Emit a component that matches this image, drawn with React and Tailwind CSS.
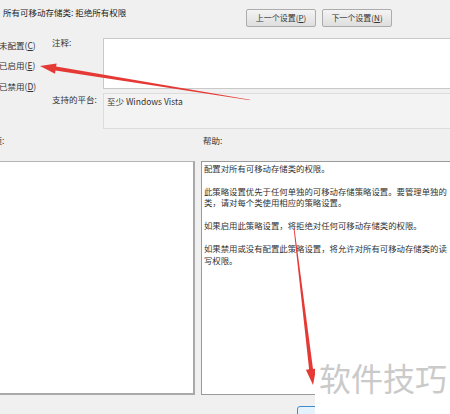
import React from "react";

const font = { fontFamily: '"Noto Sans CJK SC", "Noto Sans", sans-serif' };

function Btn({ children }) {
  return (
    <div className="shrink-0 w-[70px] h-[18px] flex items-center justify-center border border-[#acacac] rounded-[2px] bg-gradient-to-b from-[#f4f4f4] to-[#dedede] text-[8px] leading-[10px] text-[#333]">
      {children}
    </div>
  );
}

export default function App() {
  return (
    <div
      className="relative w-[450px] h-[414px] overflow-hidden bg-[#f0f0f0] text-[#222]"
      style={font}
    >
      {/* top bar */}
      <div className="flex h-[36px]">
        <div className="shrink-0 pl-[3px] pt-[7px] text-[8.5px] leading-[11px] whitespace-nowrap">
          所有可移动存储类: 拒绝所有权限
        </div>
        <div className="ml-auto mr-[58px] mt-[9px] flex gap-[6px]">
          <Btn>
            上一个设置(<span className="underline">P</span>)
          </Btn>
          <Btn>
            下一个设置(<span className="underline">N</span>)
          </Btn>
        </div>
      </div>

      {/* middle */}
      <div className="flex h-[93px]">
        <div className="shrink-0 w-[52px] flex flex-col gap-[9.5px] pt-[3.5px] -ml-[1px] text-[8.5px] leading-[11px] whitespace-nowrap text-[#333]">
          <div>
            未配置(<span className="underline">C</span>)
          </div>
          <div>
            已启用(<span className="underline">E</span>)
          </div>
          <div>
            已禁用(<span className="underline">D</span>)
          </div>
        </div>
        <div className="shrink-0 flex flex-col pt-[2px] ml-[1px]">
          <div className="flex">
            <div className="shrink-0 w-[51px] text-[8.5px] leading-[9px] text-[#333]">注释:</div>
            <div className="shrink-0 w-[360px] h-[51px] border border-[#c9c9c9] bg-white" />
          </div>
          <div className="flex mt-[4px]">
            <div className="shrink-0 w-[51px] pt-[1px] text-[8.5px] leading-[11px] whitespace-nowrap text-[#333]">
              支持的平台:
            </div>
            <div className="shrink-0 w-[360px] h-[36px] border border-[#dcdcdc] bg-[#f3f3f3] pl-[3px] pt-[2px] text-[8.5px] leading-[11px] text-[#333]">
              至少 Windows Vista
            </div>
          </div>
        </div>
      </div>

      {/* section labels */}
      <div className="flex h-[32px] pt-[6px] text-[8.5px] leading-[11px] text-[#333]">
        <div className="shrink-0 w-[203px] -ml-[15px] whitespace-nowrap">选项:</div>
        <div className="shrink-0 pl-[15px] whitespace-nowrap">帮助:</div>
      </div>

      {/* panels */}
      <div className="flex gap-[6px] h-[234px]">
        <div className="shrink-0 w-[195px] h-full bg-white border-t border-[#b5b5b5] border-r-2 border-b-2 border-r-[#a9a9a9] border-b-[#a9a9a9]" />
        <div className="shrink-0 w-[260px] h-full bg-white border border-[#9a9a9a] pl-[2px] pt-[0.5px] overflow-hidden text-[8.4px] leading-[11.5px] text-[#333] whitespace-nowrap">
          <div>配置对所有可移动存储类的权限。</div>
          <div className="mt-[11.5px]">此策略设置优先于任何单独的可移动存储策略设置。要管理单独的</div>
          <div>类，请对每个类使用相应的策略设置。</div>
          <div className="mt-[11.5px]">如果启用此策略设置，将拒绝对任何可移动存储类的权限。</div>
          <div className="mt-[11.5px]">如果禁用或没有配置此策略设置，将允许对所有可移动存储类的读</div>
          <div>写权限。</div>
        </div>
      </div>

      {/* bottom strip */}
      <div className="h-[19px] pl-[297px] pt-[11px]">
        <div className="w-[70px] h-[20px] rounded-[3px] border border-[#3c8dd0] bg-[#e5f1fb]" />
      </div>

      {/* red arrows annotation */}
      <svg
        className="absolute left-0 top-0"
        width="450"
        height="414"
        viewBox="0 0 450 414"
      >
        <polygon
          fill="#e53935"
          points="40,66 56.6,63.4 56.1,66.6 250,99.7 250,100.3 55.5,70.6 55,73.8"
        />
        <polygon
          fill="#e53935"
          points="313,385 316.2,368.5 313,368.9 294.4,228 293.6,228 309.1,369.3 305.9,369.7"
        />
      </svg>

      {/* watermark */}
      <div className="absolute left-[315px] top-[360px] w-[135px] h-[54px] bg-white pl-[4px] pt-[1px] text-[32px] leading-[32px] text-[#cacaca] whitespace-nowrap">
        软件技巧
      </div>
    </div>
  );
}
